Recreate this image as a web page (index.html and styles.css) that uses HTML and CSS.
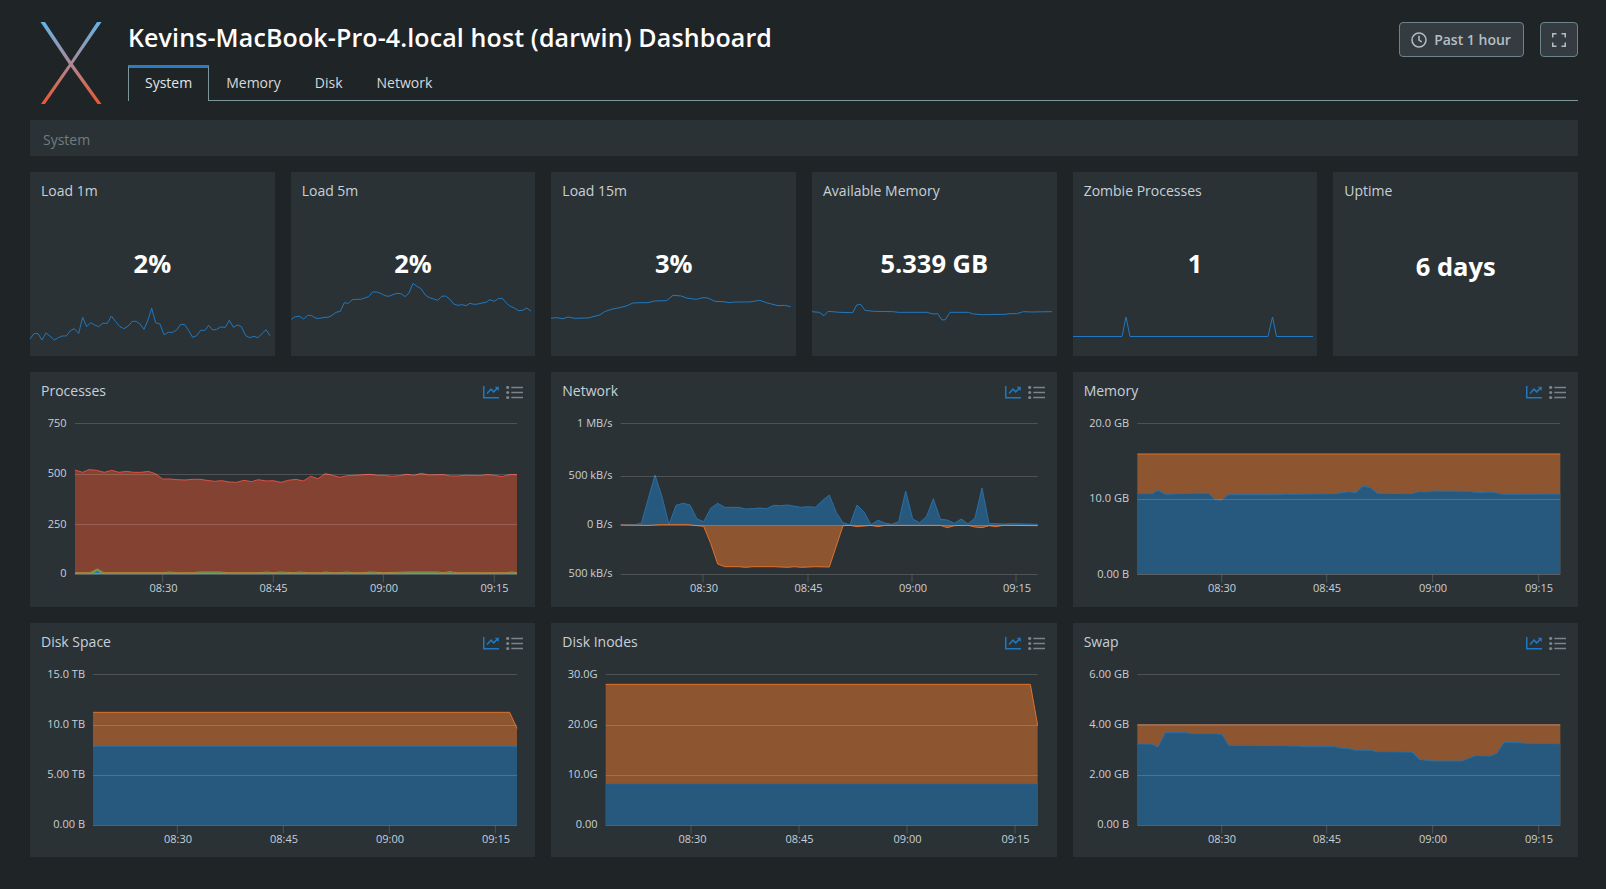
FILE: index.html
```html
<!DOCTYPE html>
<html lang="en">
<head>
<meta charset="utf-8">
<title>Kevins-MacBook-Pro-4.local host (darwin) Dashboard</title>
<link rel="stylesheet" href="styles.css">
</head>
<body>
<div class="page">
  <header class="header">
    <svg class="logo" width="62" height="82" viewBox="40 22 62 82" aria-hidden="true">
      <defs>
        <linearGradient id="xgrad" gradientUnits="userSpaceOnUse" x1="0" y1="22" x2="0" y2="104">
          <stop offset="0" stop-color="#63b4e6"/>
          <stop offset="0.5" stop-color="#a98a98"/>
          <stop offset="1" stop-color="#f0542e"/>
        </linearGradient>
      </defs>
      <polygon fill="url(#xgrad)" points="40.5,22 45,22 71.5,62 101.5,104 97.5,104 69.5,65"/>
      <polygon fill="url(#xgrad)" points="101.5,22 97,22 70.5,62 41,104 45,104 72,65"/>
    </svg>
    <div class="header-main">
      <div class="top-row">
        <h1 class="title">Kevins-MacBook-Pro-4.local host (darwin) Dashboard</h1>
        <div class="actions">
          <button class="btn btn-time">
            <svg width="16" height="16" viewBox="0 0 16 16" aria-hidden="true"><circle class="ic-stroke" cx="8" cy="8" r="7"/><path class="ic-stroke" d="M8 3.8V8l2.8 2"/></svg>
            <span>Past 1 hour</span>
          </button>
          <button class="btn btn-full" aria-label="Fullscreen">
            <svg width="14" height="14" viewBox="0 0 14 14" aria-hidden="true"><path class="ic-stroke" d="M.75 4.5V.75H4.5M9.5.75h3.75V4.5M13.25 9.5v3.75H9.5M4.5 13.25H.75V9.5"/></svg>
          </button>
        </div>
      </div>
      <nav class="tabs">
        <a class="tab tab-active">System</a>
        <a class="tab">Memory</a>
        <a class="tab">Disk</a>
        <a class="tab">Network</a>
      </nav>
    </div>
  </header>

  <div class="band">System</div>

  <section class="stats">
    <article class="stat">
      <h2 class="stat-title">Load 1m</h2>
      <div class="stat-value">2%</div>
      <svg class="spark" viewBox="0 0 245 184" width="245" height="184" aria-hidden="true"><g transform="translate(-10 -2) scale(.33333)"><polyline class="spark-line" points="30,507 42,491 54,491 66,510 78,489 90,498 103,510 115,503 127,498 139,498 151,482 163,476 176,490 188,442 200,470 212,458 224,465 236,470 248,460 262,460 274,438 287,455 300,470 312,476 325,468 337,454 349,454 360,462 372,478 384,450 395,415 407,458 420,462 432,494 445,487 458,487 470,480 482,463 494,464 506,482 518,502 530,497 542,481 555,481 566,466 578,480 590,478 602,471 616,472 628,451 640,472 652,465 664,470 677,497 689,503 702,499 714,503 726,491 738,479 750,497"/></g></svg>
    </article>
    <article class="stat">
      <h2 class="stat-title">Load 5m</h2>
      <div class="stat-value">2%</div>
      <svg class="spark" viewBox="0 0 245 184" width="245" height="184" aria-hidden="true"><g transform="translate(-270.67 -2) scale(.33333)"><polyline class="spark-line" points="813,448 825,440 838,439 850,447 862,436 874,437 887,445 899,445 911,442 923,442 935,436 947,427 960,424 972,398 984,400 996,389 1008,388 1021,388 1033,384 1045,380 1057,366 1069,366 1081,370 1094,377 1106,379 1118,374 1130,370 1142,371 1154,380 1166,369 1178,340 1190,349 1202,356 1215,375 1227,383 1240,387 1252,391 1264,379 1276,378 1288,387 1300,402 1312,406 1324,404 1337,407 1349,400 1361,403 1373,402 1385,399 1397,397 1409,389 1422,394 1434,386 1446,385 1458,399 1470,409 1482,414 1494,422 1507,421 1519,414 1532,423"/></g></svg>
    </article>
    <article class="stat">
      <h2 class="stat-title">Load 15m</h2>
      <div class="stat-value">3%</div>
      <svg class="spark" viewBox="0 0 245 184" width="245" height="184" aria-hidden="true"><g transform="translate(-11.33 -2) scale(.33333)"><polyline class="spark-line" points="33,445 50,443 70,446 85,441 105,445 145,444 180,435 195,425 215,418 240,413 260,408 280,399 305,398 325,398 345,393 380,392 400,376 425,378 440,384 470,388 490,383 505,384 525,394 550,395 570,398 585,396 630,396 660,391 680,398 715,407 735,406 753,410"/></g></svg>
    </article>
    <article class="stat">
      <h2 class="stat-title">Available Memory</h2>
      <div class="stat-value">5.339 GB</div>
      <svg class="spark" viewBox="0 0 245 184" width="245" height="184" aria-hidden="true"><g transform="translate(-272 -2) scale(.33333)"><polyline class="spark-line" points="816,425 838,427 852,437 864,424 900,427 938,428 950,405 962,403 975,421 1000,424 1060,425 1075,427 1160,427 1180,432 1193,431 1206,450 1216,449 1230,427 1285,427 1300,432 1330,434 1395,433 1410,431 1430,431 1450,425 1475,426 1535,425"/></g></svg>
    </article>
    <article class="stat">
      <h2 class="stat-title">Zombie Processes</h2>
      <div class="stat-value">1</div>
      <svg class="spark" viewBox="0 0 245 184" width="245" height="184" aria-hidden="true"><polyline class="spark-line spark-thin" points="0,164.5 49,164.5 53,145 57,164.5 195,164.5 199.5,145 203.5,164.5 240,164.5"/></svg>
    </article>
    <article class="stat">
      <h2 class="stat-title">Uptime</h2>
      <div class="stat-value stat-value-low">6 days</div>
    </article>
  </section>

  <section class="charts">
    <article class="panel">
      <div class="panel-head">
        <h2 class="panel-title">Processes</h2>
        <div class="panel-icons">
          <svg width="16" height="13" viewBox="0 0 16 13" aria-hidden="true"><path class="ic-chart" d="M.75 0v11.75H16"/><path class="ic-chart" d="M4 7.5 8 3.2l2.7 2.7 4-4"/><path class="ic-chart-tip" d="M11.7 .8H15.8V5Z"/></svg>
          <svg width="17" height="13" viewBox="0 0 17 13" aria-hidden="true"><circle class="ic-list" cx="1.7" cy="1.5" r="1.6"/><circle class="ic-list" cx="1.7" cy="6.5" r="1.6"/><circle class="ic-list" cx="1.7" cy="11.5" r="1.6"/><path class="ic-list" d="M5.3.75H17v1.5H5.3zM5.3 5.75H17v1.5H5.3zM5.3 10.75H17v1.5H5.3z"/></svg>
        </div>
      </div>
      <svg class="chart" viewBox="0 0 505 196" width="505" height="196" role="img" aria-label="Processes chart">
        <g transform="translate(-10 -40) scale(.33333)">
          <polygon class="fill-red" points="165,300 188,307 207,299 230,301 253,307 275,301 297,307 320,304 340,307 362,307 385,304 406,311 428,327 450,327 472,329 495,330 517,328 540,328 560,331 583,334 605,332 627,336 650,337 672,331 695,335 715,329 738,333 760,332 783,337 805,331 828,328 850,333 872,319 894,326 916,311 938,316 960,322 982,317 1005,316 1050,313 1072,316 1094,316 1116,319 1138,317 1160,313 1182,316 1204,310 1226,315 1270,314 1292,318 1314,318 1336,316 1380,317 1402,314 1424,316 1446,320 1468,314 1491,314 1491,610 165,610"/>
          <polyline class="line-red" points="165,300 188,307 207,299 230,301 253,307 275,301 297,307 320,304 340,307 362,307 385,304 406,311 428,327 450,327 472,329 495,330 517,328 540,328 560,331 583,334 605,332 627,336 650,337 672,331 695,335 715,329 738,333 760,332 783,337 805,331 828,328 850,333 872,319 894,326 916,311 938,316 960,322 982,317 1005,316 1050,313 1072,316 1094,316 1116,319 1138,317 1160,313 1182,316 1204,310 1226,315 1270,314 1292,318 1314,318 1336,316 1380,317 1402,314 1424,316 1446,320 1468,314 1491,314"/>
          <polyline class="line-yellow" points="165,608 210,608 232,597 252,608 430,608 450,606 470,608 520,608 540,606 600,606 620,608 720,608 740,606 760,608 780,606 820,608 840,606 860,608 905,608 918,606 930,608 960,608 980,606 1000,608 1030,608 1050,606 1090,608 1170,606 1250,606 1270,608 1290,605 1310,608 1400,608 1460,608 1475,606 1491,608"/>
          <polygon class="fill-green" points="165,610 210,610 232,596 252,610 430,610 450,607 470,610 520,610 540,607 600,607 620,610 720,610 740,607 760,610 780,607 820,610 840,607 860,610 905,610 918,607 930,610 960,610 980,607 1000,610 1030,610 1050,607 1090,610 1170,607 1250,607 1270,610 1290,606 1310,610 1400,610 1460,610 1475,607 1491,610"/>
          <polygon class="fill-blue-solid" points="222,610 232,602 242,610"/>
          <line class="line-teal" x1="165" y1="611" x2="1491" y2="611"/>
        </g>
        <path class="grid" d="M45 13.5H487M45 64.5H487M45 114.5H487M45 164.5H487"/>
        <path class="grid" d="M132.7 164.5v8M243.3 164.5v8M353.3 164.5v8M464.3 164.5v8"/>
        <text class="yl" x="36.5" y="17">750</text><text class="yl" x="36.5" y="67">500</text><text class="yl" x="36.5" y="117.5">250</text><text class="yl" x="36.5" y="167">0</text>
        <text class="xl" x="133.5" y="182">08:30</text><text class="xl" x="243.5" y="182">08:45</text><text class="xl" x="354" y="182">09:00</text><text class="xl" x="464.5" y="182">09:15</text>
      </svg>
    </article>

    <article class="panel">
      <div class="panel-head">
        <h2 class="panel-title">Network</h2>
        <div class="panel-icons">
          <svg width="16" height="13" viewBox="0 0 16 13" aria-hidden="true"><path class="ic-chart" d="M.75 0v11.75H16"/><path class="ic-chart" d="M4 7.5 8 3.2l2.7 2.7 4-4"/><path class="ic-chart-tip" d="M11.7 .8H15.8V5Z"/></svg>
          <svg width="17" height="13" viewBox="0 0 17 13" aria-hidden="true"><circle class="ic-list" cx="1.7" cy="1.5" r="1.6"/><circle class="ic-list" cx="1.7" cy="6.5" r="1.6"/><circle class="ic-list" cx="1.7" cy="11.5" r="1.6"/><path class="ic-list" d="M5.3.75H17v1.5H5.3zM5.3 5.75H17v1.5H5.3zM5.3 10.75H17v1.5H5.3z"/></svg>
        </div>
      </div>
      <svg class="chart" viewBox="0 0 505 196" width="505" height="196" role="img" aria-label="Network chart">
        <g transform="translate(-6.33 -40) scale(.33333)">
          <polygon class="fill-blue" points="228,464 270,464 290,460 331,315 352,380 373,464 394,406 415,400 436,405 457,447 477,455 498,415 519,400 540,412 582,412 603,417 624,416 645,414 666,416 687,406 708,407 729,405 750,409 770,412 791,410 812,412 833,392 854,375 875,428 895,458 916,464 937,405 958,426 979,464 1000,451 1020,459 1041,463 1062,455 1083,363 1104,447 1125,458 1146,439 1166,386 1187,448 1208,450 1229,460 1250,447 1270,462 1291,444 1312,354 1333,461 1354,461 1375,462 1400,461 1479,463 1479,465 228,465"/>
          <polyline class="line-blue" points="228,464 270,464 290,460 331,315 352,380 373,464 394,406 415,400 436,405 457,447 477,455 498,415 519,400 540,412 582,412 603,417 624,416 645,414 666,416 687,406 708,407 729,405 750,409 770,412 791,410 812,412 833,392 854,375 875,428 895,458 916,464 937,405 958,426 979,464 1000,451 1020,459 1041,463 1062,455 1083,363 1104,447 1125,458 1146,439 1166,386 1187,448 1208,450 1229,460 1250,447 1270,462 1291,444 1312,354 1333,461 1354,461 1375,462 1400,461 1479,463"/>
          <polygon class="fill-orange" points="228,465 310,466 350,464 430,464 477,469 498,520 519,582 540,590 582,590 603,592 624,590 687,590 729,592 750,590 770,592 812,590 854,591 895,467 916,466 937,470 979,466 1000,470 1020,466 1187,466 1208,473 1229,467 1270,466 1291,471 1312,473 1333,467 1354,470 1375,466 1479,467 1479,465 228,465"/>
          <polyline class="line-orange" points="228,465 310,466 350,464 430,464 477,469 498,520 519,582 540,590 582,590 603,592 624,590 687,590 729,592 750,590 770,592 812,590 854,591 895,467 916,466 937,470 979,466 1000,470 1020,466 1187,466 1208,473 1229,467 1270,466 1291,471 1312,473 1333,467 1354,470 1375,466 1479,467"/>
        </g>
        <path class="grid" d="M69.7 13.5H486.7M69.7 66.5H486.7M69.7 115.5H486.7M69.7 164.5H486.7"/>
        <path class="grid" d="M152 164.5v8M257 164.5v8M361 164.5v8M465 164.5v8"/>
        <text class="yl" x="61.5" y="17">1 MB/s</text><text class="yl" x="61.5" y="69">500 kB/s</text><text class="yl" x="61.5" y="118">0 B/s</text><text class="yl" x="61.5" y="167">500 kB/s</text>
        <text class="xl" x="153" y="182">08:30</text><text class="xl" x="257.5" y="182">08:45</text><text class="xl" x="362" y="182">09:00</text><text class="xl" x="466" y="182">09:15</text>
      </svg>
    </article>

    <article class="panel">
      <div class="panel-head">
        <h2 class="panel-title">Memory</h2>
        <div class="panel-icons">
          <svg width="16" height="13" viewBox="0 0 16 13" aria-hidden="true"><path class="ic-chart" d="M.75 0v11.75H16"/><path class="ic-chart" d="M4 7.5 8 3.2l2.7 2.7 4-4"/><path class="ic-chart-tip" d="M11.7 .8H15.8V5Z"/></svg>
          <svg width="17" height="13" viewBox="0 0 17 13" aria-hidden="true"><circle class="ic-list" cx="1.7" cy="1.5" r="1.6"/><circle class="ic-list" cx="1.7" cy="6.5" r="1.6"/><circle class="ic-list" cx="1.7" cy="11.5" r="1.6"/><path class="ic-list" d="M5.3.75H17v1.5H5.3zM5.3 5.75H17v1.5H5.3zM5.3 10.75H17v1.5H5.3z"/></svg>
        </div>
      </div>
      <svg class="chart" viewBox="0 0 505 196" width="505" height="196" role="img" aria-label="Memory chart">
        <g transform="translate(-7.67 -40) scale(.33333)">
          <polygon class="fill-orange" points="216,252 1485,252 1485,613 216,613"/>
          <polyline class="line-orange" points="216,252 1485,252"/>
          <polygon class="fill-blue" points="216,371 260,371 278,361 300,373 340,371 385,370 430,370 448,388 468,391 490,374 640,374 660,372 680,373 810,371 850,365 872,368 892,349 914,352 936,370 1040,371 1060,365 1080,366 1104,363 1210,364 1230,367 1250,368 1270,366 1290,368 1315,373 1485,372 1485,613 216,613"/>
          <polyline class="line-blue" points="216,371 260,371 278,361 300,373 340,371 385,370 430,370 448,388 468,391 490,374 640,374 660,372 680,373 810,371 850,365 872,368 892,349 914,352 936,370 1040,371 1060,365 1080,366 1104,363 1210,364 1230,367 1250,368 1270,366 1290,368 1315,373 1485,372"/>
        </g>
        <path class="grid" d="M64.3 13.5H487.3M64.3 89.5H487.3M64.3 164.5H487.3"/>
        <path class="grid" d="M148.7 164.5v8M253.7 164.5v8M359.7 164.5v8M465.7 164.5v8"/>
        <text class="yl" x="56" y="17">20.0 GB</text><text class="yl" x="56" y="92">10.0 GB</text><text class="yl" x="56" y="167.5">0.00 B</text>
        <text class="xl" x="149" y="182">08:30</text><text class="xl" x="254" y="182">08:45</text><text class="xl" x="360" y="182">09:00</text><text class="xl" x="466" y="182">09:15</text>
      </svg>
    </article>

    <article class="panel">
      <div class="panel-head">
        <h2 class="panel-title">Disk Space</h2>
        <div class="panel-icons">
          <svg width="16" height="13" viewBox="0 0 16 13" aria-hidden="true"><path class="ic-chart" d="M.75 0v11.75H16"/><path class="ic-chart" d="M4 7.5 8 3.2l2.7 2.7 4-4"/><path class="ic-chart-tip" d="M11.7 .8H15.8V5Z"/></svg>
          <svg width="17" height="13" viewBox="0 0 17 13" aria-hidden="true"><circle class="ic-list" cx="1.7" cy="1.5" r="1.6"/><circle class="ic-list" cx="1.7" cy="6.5" r="1.6"/><circle class="ic-list" cx="1.7" cy="11.5" r="1.6"/><path class="ic-list" d="M5.3.75H17v1.5H5.3zM5.3 5.75H17v1.5H5.3zM5.3 10.75H17v1.5H5.3z"/></svg>
        </div>
      </div>
      <svg class="chart" viewBox="0 0 505 196" width="505" height="196" role="img" aria-label="Disk Space chart">
        <g transform="translate(-10 -41) scale(.33333)">
          <polygon class="fill-orange" points="219,277 1469,277 1491,325 1491,616 219,616"/>
          <polyline class="line-orange" points="219,277 1469,277 1491,325"/>
          <polygon class="fill-blue" points="219,379 1491,379 1491,616 219,616"/>
          <polyline class="line-blue" points="219,379 1491,379"/>
        </g>
        <path class="grid" d="M63 13.5H487M63 64.5H487M63 114.5H487M63 164.5H487"/>
        <path class="grid" d="M147.3 164.5v8M253.3 164.5v8M359.3 164.5v8M465.3 164.5v8"/>
        <text class="yl" x="55" y="17">15.0 TB</text><text class="yl" x="55" y="67">10.0 TB</text><text class="yl" x="55" y="117">5.00 TB</text><text class="yl" x="55" y="167">0.00 B</text>
        <text class="xl" x="148" y="182">08:30</text><text class="xl" x="254" y="182">08:45</text><text class="xl" x="360" y="182">09:00</text><text class="xl" x="466" y="182">09:15</text>
      </svg>
    </article>

    <article class="panel">
      <div class="panel-head">
        <h2 class="panel-title">Disk Inodes</h2>
        <div class="panel-icons">
          <svg width="16" height="13" viewBox="0 0 16 13" aria-hidden="true"><path class="ic-chart" d="M.75 0v11.75H16"/><path class="ic-chart" d="M4 7.5 8 3.2l2.7 2.7 4-4"/><path class="ic-chart-tip" d="M11.7 .8H15.8V5Z"/></svg>
          <svg width="17" height="13" viewBox="0 0 17 13" aria-hidden="true"><circle class="ic-list" cx="1.7" cy="1.5" r="1.6"/><circle class="ic-list" cx="1.7" cy="6.5" r="1.6"/><circle class="ic-list" cx="1.7" cy="11.5" r="1.6"/><path class="ic-list" d="M5.3.75H17v1.5H5.3zM5.3 5.75H17v1.5H5.3zM5.3 10.75H17v1.5H5.3z"/></svg>
        </div>
      </div>
      <svg class="chart" viewBox="0 0 505 196" width="505" height="196" role="img" aria-label="Disk Inodes chart">
        <g transform="translate(-6.33 -41) scale(.33333)">
          <polygon class="fill-orange" points="183,193 1457,193 1479,316 1479,616 183,616"/>
          <polyline class="line-orange" points="183,193 1457,193 1479,316"/>
          <polygon class="fill-blue" points="183,491 1479,491 1479,616 183,616"/>
          <polyline class="line-blue" points="183,491 1479,491"/>
        </g>
        <path class="grid" d="M54.7 13.5H486.7M54.7 64.5H486.7M54.7 114.5H486.7M54.7 164.5H486.7"/>
        <path class="grid" d="M140 164.5v8M248 164.5v8M356 164.5v8M464 164.5v8"/>
        <text class="yl" x="46.5" y="17">30.0G</text><text class="yl" x="46.5" y="67">20.0G</text><text class="yl" x="46.5" y="117">10.0G</text><text class="yl" x="46.5" y="167">0.00</text>
        <text class="xl" x="141.5" y="182">08:30</text><text class="xl" x="248.5" y="182">08:45</text><text class="xl" x="356.5" y="182">09:00</text><text class="xl" x="464.5" y="182">09:15</text>
      </svg>
    </article>

    <article class="panel">
      <div class="panel-head">
        <h2 class="panel-title">Swap</h2>
        <div class="panel-icons">
          <svg width="16" height="13" viewBox="0 0 16 13" aria-hidden="true"><path class="ic-chart" d="M.75 0v11.75H16"/><path class="ic-chart" d="M4 7.5 8 3.2l2.7 2.7 4-4"/><path class="ic-chart-tip" d="M11.7 .8H15.8V5Z"/></svg>
          <svg width="17" height="13" viewBox="0 0 17 13" aria-hidden="true"><circle class="ic-list" cx="1.7" cy="1.5" r="1.6"/><circle class="ic-list" cx="1.7" cy="6.5" r="1.6"/><circle class="ic-list" cx="1.7" cy="11.5" r="1.6"/><path class="ic-list" d="M5.3.75H17v1.5H5.3zM5.3 5.75H17v1.5H5.3zM5.3 10.75H17v1.5H5.3z"/></svg>
        </div>
      </div>
      <svg class="chart" viewBox="0 0 505 196" width="505" height="196" role="img" aria-label="Swap chart">
        <g transform="translate(-7.67 -41) scale(.33333)">
          <polygon class="fill-orange" points="216,315 1485,315 1485,616 216,616"/>
          <polyline class="line-orange" points="216,315 1485,315"/>
          <polygon class="fill-blue" points="216,372 258,372 278,381 300,338 360,338 385,341 450,341 470,343 490,376 660,377 680,378 700,378 720,380 810,380 830,385 850,385 870,391 915,391 935,395 1040,396 1062,418 1100,423 1190,423 1230,407 1275,408 1295,400 1316,367 1360,368 1380,370 1485,371 1485,616 216,616"/>
          <polyline class="line-blue" points="216,372 258,372 278,381 300,338 360,338 385,341 450,341 470,343 490,376 660,377 680,378 700,378 720,380 810,380 830,385 850,385 870,391 915,391 935,395 1040,396 1062,418 1100,423 1190,423 1230,407 1275,408 1295,400 1316,367 1360,368 1380,370 1485,371"/>
        </g>
        <path class="grid" d="M64.3 13.5H487.3M64.3 63.5H487.3M64.3 114.5H487.3M64.3 164.5H487.3"/>
        <path class="grid" d="M148.7 164.5v8M253.7 164.5v8M359.7 164.5v8M465.7 164.5v8"/>
        <text class="yl" x="56" y="17">6.00 GB</text><text class="yl" x="56" y="67">4.00 GB</text><text class="yl" x="56" y="117">2.00 GB</text><text class="yl" x="56" y="167">0.00 B</text>
        <text class="xl" x="149" y="182">08:30</text><text class="xl" x="254" y="182">08:45</text><text class="xl" x="360" y="182">09:00</text><text class="xl" x="466" y="182">09:15</text>
      </svg>
    </article>
  </section>
</div>
</body>
</html>
```
FILE: styles.css
```css
* { box-sizing: border-box; }
html, body { margin: 0; padding: 0; background: #1f2427; }
body { font-family: "Open Sans", "Noto Sans", "Liberation Sans", sans-serif; color: #c7d0d9; }

.page { width: 1606px; padding: 0 28px 0 30px; }

/* Header */
.header { display: flex; height: 101px; }
.logo { flex: none; margin: 22px 0 0 10px; }
.header-main { flex: 1; margin-left: 26px; padding-top: 22px; min-width: 0; }
.top-row { display: flex; justify-content: space-between; align-items: flex-start; height: 35px; }
.title { margin: 0; font-size: 25px; line-height: 30px; font-weight: 600; letter-spacing: 0.12px; color: #fff; white-space: nowrap; }
.actions { display: flex; gap: 16px; }
.btn { display: flex; align-items: center; justify-content: center; height: 35px; border: 1px solid #6d8389; border-radius: 4px; background: #343c42; color: #b4bec3; font: 600 14px/1 "Open Sans", sans-serif; padding: 0; }
.btn-time { gap: 7px; padding: 0 12px 0 11px; width: 125px; }
.btn-full { width: 38px; }
.ic-stroke { fill: none; stroke: #b4bec3; stroke-width: 1.5; }

/* Tabs */
.tabs { display: flex; height: 36px; margin-top: 8px; border-bottom: 1px solid #7d959d; }
.tab { height: 36px; padding: 3px 16px 0; font-size: 14px; line-height: 24px; color: #d8d9da; border: 1px solid transparent; border-top-width: 3px; border-bottom: 0; }
.tab-active { background: #1f2427; border-top-color: #2a7dc4; border-left-color: #7d959d; border-right-color: #7d959d; color: #e3e6e8; }

/* Section band */
.band { height: 36px; margin-top: 19px; padding: 4px 0 0 13px; background: #2b3235; font-size: 14px; line-height: 32px; color: #6f7c80; }

/* Single stats */
.stats { display: grid; grid-template-columns: repeat(6, 1fr); gap: 16px; margin-top: 16px; }
.stat { position: relative; height: 184px; background: #2b3235; overflow: hidden; }
.stat-title { margin: 0; padding: 9px 0 0 11px; font-size: 14px; line-height: 19px; font-weight: 400; color: #c7d0d9; }
.stat-value { position: relative; z-index: 1; margin-top: 45px; font-size: 25.5px; line-height: 36px; font-weight: 700; color: #fff; text-align: center; }
.stat-value-low { margin-top: 48px; }
.spark { position: absolute; left: 0; top: 0; }
.spark-line { fill: none; stroke: #1f78c1; stroke-width: 3; stroke-linejoin: round; }
.spark-thin { stroke-width: 1; }

/* Chart panels */
.charts { display: grid; grid-template-columns: repeat(3, 1fr); grid-template-rows: 235px 234px; column-gap: 16px; row-gap: 16px; margin-top: 16px; }
.panel { background: #2b3235; overflow: hidden; }
.panel-head { display: flex; justify-content: space-between; height: 38px; padding: 9px 12px 0 11px; }
.panel-title { margin: 0; font-size: 14px; line-height: 19px; font-weight: 400; color: #c7d0d9; }
.panel-icons { display: flex; gap: 7px; margin-top: 5px; height: 13px; }
.ic-chart { fill: none; stroke: #1f78c1; stroke-width: 1.5; }
.ic-chart-tip { fill: #1f78c1; }
.ic-list { fill: #7b8589; }
.chart { display: block; }

.fill-blue { fill: #27597f; }
.fill-orange { fill: #8d5630; }
.fill-red { fill: #844232; }
.fill-green { fill: #629e51; }
.fill-blue-solid { fill: #1f78c1; }
.line-blue { fill: none; stroke: #2a6ea6; stroke-width: 3; }
.line-orange { fill: none; stroke: #e0702a; stroke-width: 3; }
.line-red { fill: none; stroke: #e24d42; stroke-width: 3; }
.line-yellow { fill: none; stroke: #c9a93c; stroke-width: 2; }
.line-teal { stroke: #6aa9a0; stroke-width: 3; }
.grid { fill: none; stroke: rgba(255, 255, 255, 0.16); stroke-width: 1; }
.yl, .xl { font-size: 11px; fill: #c7d0d9; }
.yl { text-anchor: end; }
.xl { text-anchor: middle; }
```
